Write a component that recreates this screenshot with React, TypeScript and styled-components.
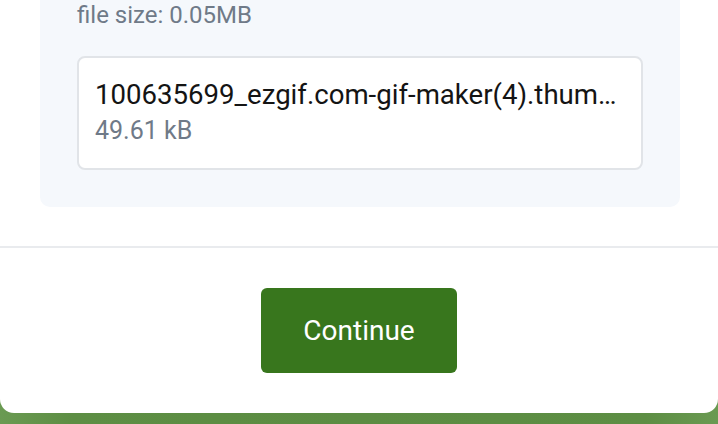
import styled, { createGlobalStyle } from 'styled-components'

const GlobalStyle = createGlobalStyle`
  html, body {
    margin: 0;
    padding: 0;
    height: 100%;
    overflow: hidden;
  }
  body {
    font-family: Roboto, 'Liberation Sans', Arial, sans-serif;
    background: linear-gradient(90deg, #6a9a52 0%, #5d8e44 10%, #5b8c42 50%, #5d8e44 90%, #6a9a52 100%);
  }
`

const Modal = styled.div`
  background: #ffffff;
  border-radius: 0 0 14px 14px;
  width: 718px;
  display: flex;
  flex-direction: column;
`

const Body = styled.div`
  padding: 0 38px 39px 40px;
  border-bottom: 2px solid #e9ebee;
`

const Details = styled.div`
  background: #f5f8fc;
  border-radius: 0 0 10px 10px;
  margin-top: -20px;
  padding: 20px 37px 37px;
`

const Meta = styled.div`
  font-size: 24px;
  line-height: 30px;
  color: #6f7a88;
  margin-bottom: 26px;
`

const FileCard = styled.div`
  background: #ffffff;
  border: 2px solid #e1e4e8;
  border-radius: 8px;
  padding: 20px 16px 18px;
  display: flex;
  flex-direction: column;
`

const FileName = styled.div`
  font-size: 27.6px;
  line-height: 34px;
  color: #141414;
  white-space: nowrap;
  overflow: hidden;
  text-overflow: ellipsis;
`

const FileSize = styled.div`
  font-size: 25px;
  line-height: 38px;
  color: #6f7a88;
`

const Footer = styled.div`
  display: flex;
  justify-content: center;
  padding: 40px 0 40px;
`

const Button = styled.button`
  width: 196px;
  height: 85px;
  border: none;
  border-radius: 6px;
  background: #38761d;
  color: #ffffff;
  font-family: Roboto, 'Liberation Sans', Arial, sans-serif;
  font-size: 28px;
  cursor: pointer;
`

export default function App() {
  return (
    <>
      <GlobalStyle />
      <Modal>
        <Body>
          <Details>
            <Meta>file size: 0.05MB</Meta>
            <FileCard>
              <FileName>100635699_ezgif.com-gif-maker(4).thumbnail.png</FileName>
              <FileSize>49.61 kB</FileSize>
            </FileCard>
          </Details>
        </Body>
        <Footer>
          <Button>Continue</Button>
        </Footer>
      </Modal>
    </>
  )
}
